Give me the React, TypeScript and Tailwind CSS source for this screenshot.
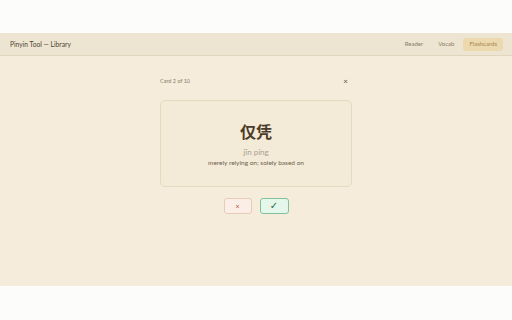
import React from "react";

const font = { fontFamily: "Lato, 'Noto Sans CJK SC', sans-serif" };

function NavLink({ label, active }: { label: string; active?: boolean }) {
  return (
    <button
      className={
        active
          ? "h-[13px] px-[6px] rounded-[3px] bg-[#ecd9b0] text-[#a8864e] text-[6px] leading-none"
          : "h-[13px] px-[6px] text-[#8a7a64] text-[6px] leading-none"
      }
    >
      {label}
    </button>
  );
}

export default function App() {
  return (
    <div className="w-[512px] h-[320px] bg-[#fcfdfb] pt-[33px]" style={font}>
      <div className="h-[253px] flex flex-col bg-[#f5ecdb]">
        {/* Header */}
        <header className="h-[23px] shrink-0 flex items-center justify-between pl-[10px] pr-[9px] bg-[#ede5d1] border-b border-[#e1d6bd]">
          <span className="text-[6.7px] text-[#4e4234]">Pinyin Tool — Library</span>
          <nav className="flex items-center gap-[3px]">
            <NavLink label="Reader" />
            <NavLink label="Vocab" />
            <NavLink label="Flashcards" active />
          </nav>
        </header>

        {/* Flashcard */}
        <main className="flex-1 flex justify-center pt-[20px]">
          <div className="w-[192px] flex flex-col">
            <div className="flex items-center justify-between h-[10px]">
              <span className="text-[5.5px] text-[#8b7c66]">Card 2 of 10</span>
              <span className="text-[8px] text-[#5b4e3e] leading-none pr-[4px]">×</span>
            </div>
            <div className="mt-[14px] h-[87px] rounded-[5px] border border-[#e5d9be] bg-[#f4ead8] flex flex-col items-center pt-[22px]">
              <div
                className="text-[16px] font-bold text-[#4a3b29] leading-none"
                style={{ fontFamily: "'Noto Sans CJK SC', sans-serif" }}
              >
                仅凭
              </div>
              <div className="mt-[9px] text-[8px] text-[#aaa090] leading-none">jǐn píng</div>
              <div className="mt-[4px] text-[6.5px] text-[#6c5f4d] leading-none">merely relying on; solely based on</div>
            </div>
            <div className="mt-[11px] flex justify-center gap-[8px]">
              <button className="w-[28px] h-[16px] rounded-[3px] border border-[#e8cbb9] bg-[#fbeee6] text-[7px] text-[#b0502f] leading-none flex items-center justify-center">
                ×
              </button>
              <button
                className="w-[29px] h-[16px] rounded-[3px] border border-[#84c19a] bg-[#e5f6ea] text-[10px] text-[#2f6a44] leading-none flex items-center justify-center"
                style={{ fontFamily: "'DejaVu Sans', sans-serif" }}
              >
                ✓
              </button>
            </div>
          </div>
        </main>
      </div>
    </div>
  );
}
